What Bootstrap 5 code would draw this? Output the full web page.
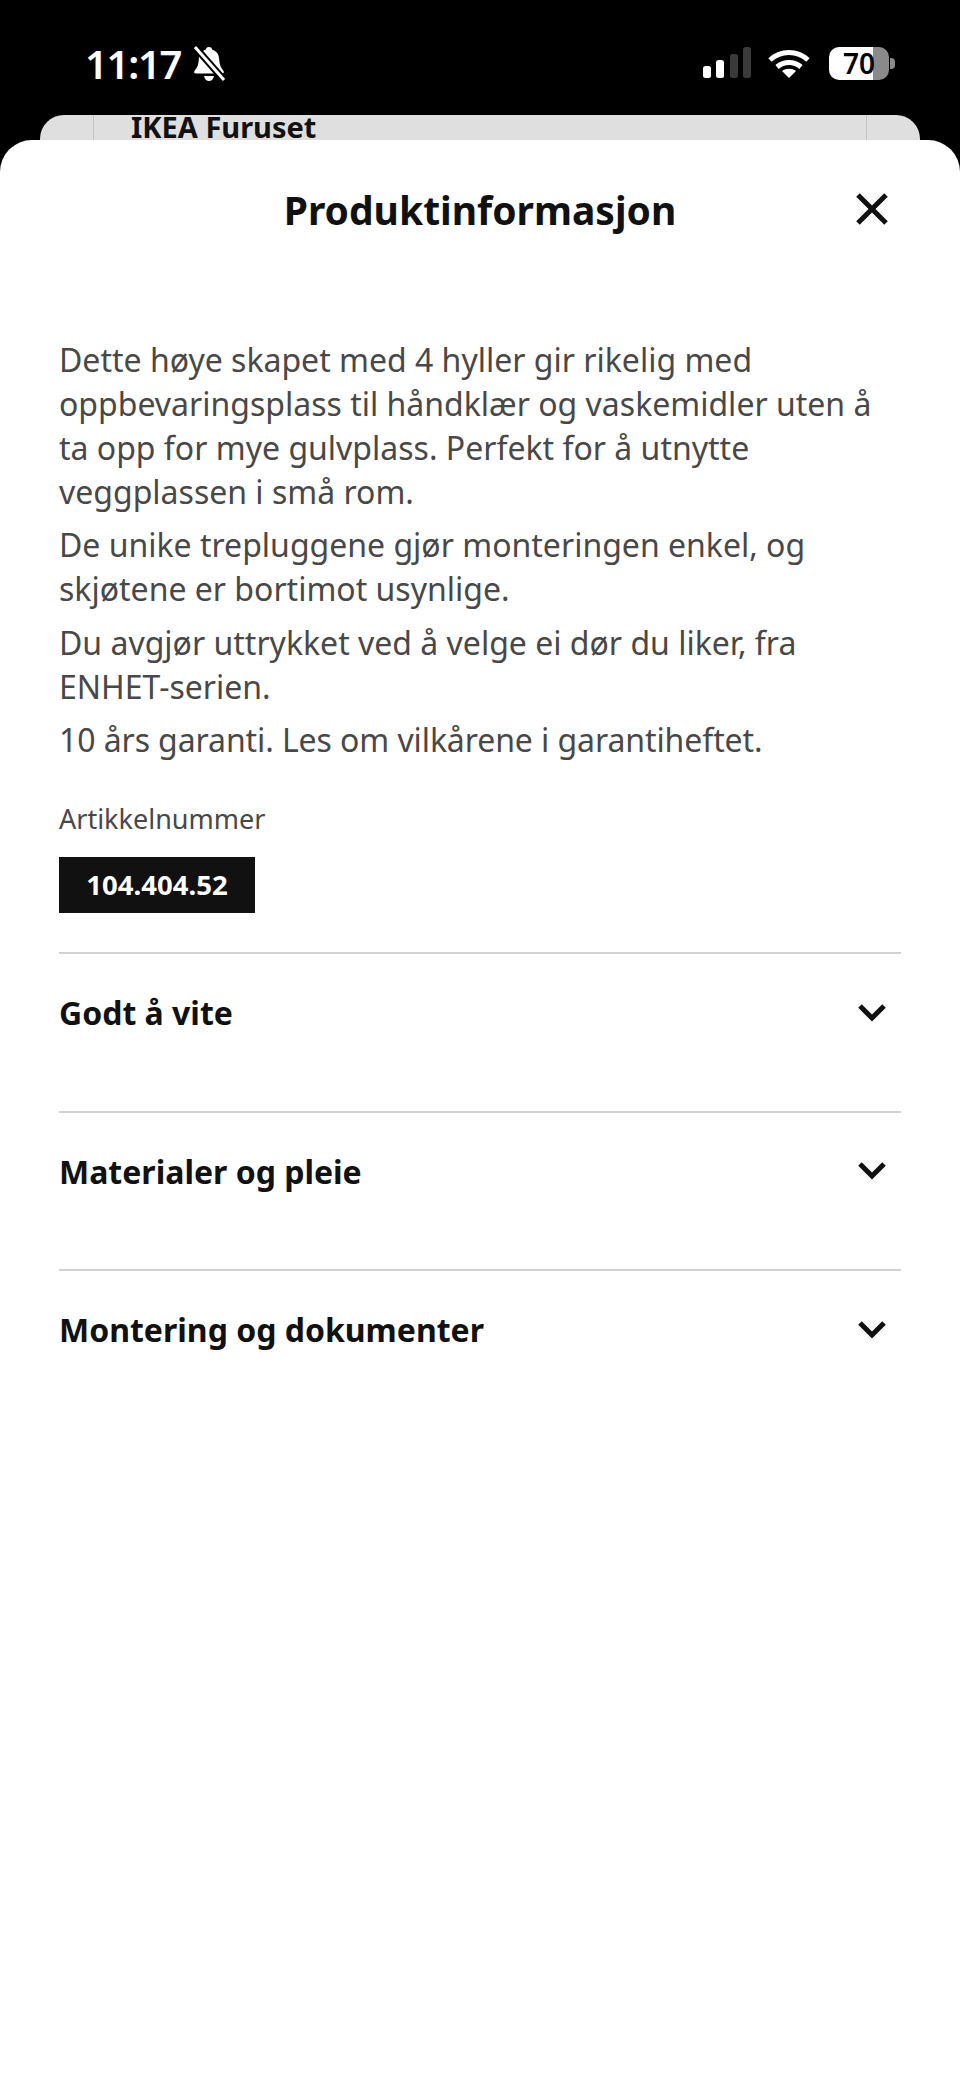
<!DOCTYPE html>
<html lang="nb">
<head>
  <meta charset="UTF-8" />
  <meta name="viewport" content="width=device-width, initial-scale=1.0"/>
  <title>Produktinformasjon</title>
  <link href="https://cdn.jsdelivr.net/npm/bootstrap@5.3.0/dist/css/bootstrap.min.css" rel="stylesheet" />
  <style>
    html, body { height: 100%; }
    body { background: #000; font-family: "Noto Sans", sans-serif; color: #111; overflow: hidden; }
    .phone { height: 2078px; }
    .status-row { height: 115px; padding: 37px 65px 0 85px; color: #fff; }
    .clock { font-size: 40px; font-weight: 600; line-height: 54px; letter-spacing: -1.3px; }
    .status-bell { margin-top: 9px; margin-left: 3px; }
    .status-icon { margin-top: 10px; }
    .signal-icon { margin-right: 17px; }
    .battery { width: 60px; height: 33px; border-radius: 10px; background: linear-gradient(90deg, #fff 44px, #8a8a8a 44px); font-size: 28px; font-weight: 600; line-height: 33px; color: #000; }
    .battery-wrap { margin-top: 10px; margin-left: 19px; }
    .battery-nub { width: 5px; height: 11px; background: #8a8a8a; border-radius: 0 4px 4px 0; margin-left: 1px; }
    .behind-card { height: 25px; margin: 0 40px; background: #dfdfdf; border-radius: 24px 24px 0 0; padding: 0 53px; }
    .behind-inner { height: 25px; border-left: 1px solid #c4c4c4; border-right: 1px solid #c4c4c4; padding-left: 37px; font-size: 29px; font-weight: 700; line-height: 24px; white-space: nowrap; }
    .sheet { height: 1938px; background: #fff; border-radius: 32px 32px 0 0; padding: 0 59px; }
    .sheet-head { height: 140px; position: relative; }
    .sheet-title { font-size: 39px; font-weight: 700; line-height: 52px; margin: 0; }
    .close-btn { position: absolute; right: 13px; top: 53px; line-height: 0; }
    .descr { margin-top: 58px; font-size: 32px; line-height: 44px; color: #484848; }
    .descr p { margin: 0 0 9.3px; }
    .descr p.tight-line { letter-spacing: -.09px; }
    .art-label { margin-top: 38.5px; font-size: 27px; line-height: 37px; color: #484848; }
    .art-no { width: 196px; height: 56px; margin-top: 20px; background: #111; color: #fff; font-size: 27.5px; font-weight: 700; line-height: 56px; }
    .acc-list { margin-top: 39px; }
    .acc-row { height: 158.5px; border-top: 2px solid #d2d2d2; padding: 37px 15px 0 0; font-size: 32px; font-weight: 700; line-height: 44px; }
    .acc-chev { margin-top: 11.5px; }
  </style>
</head>
<body>
  <div class="phone d-flex flex-column">
    <div class="status-row d-flex justify-content-between align-items-start">
      <div class="d-flex align-items-start gap-2">
        <span class="clock">11:17</span>
        <svg class="status-bell" width="34" height="36" viewBox="0 0 34 36" fill="#fff">
          <path d="M17 1c2 0 3 1.300 3.300 2.800 4.600 1.300 6.700 5 6.900 9.700.2 5 1.600 8.400 4.300 11.500.8 1 .2 2.500-1.200 2.500H3.700c-1.400 0-2-1.500-1.200-2.500 2.700-3.100 4.100-6.500 4.300-11.500.2-4.700 2.300-8.400 6.900-9.700C14 2.300 15 1 17 1z"/>
          <path d="M12 30h10c-.5 3-2.500 5-5 5s-4.500-2-5-5z"/>
          <path d="M3 1l29 33" stroke="#000" stroke-width="7" fill="none"/>
          <path d="M3 1l29 33" stroke="#fff" stroke-width="3" fill="none"/>
        </svg>
      </div>
      <div class="d-flex align-items-start">
        <svg class="status-icon signal-icon" width="48" height="32" viewBox="0 0 48 32">
          <rect x="0" y="19" width="8" height="12" rx="2.500" fill="#fff"/>
          <rect x="13" y="13" width="8" height="18" rx="2.500" fill="#fff"/>
          <rect x="27" y="7" width="8" height="24" rx="2.500" fill="#3a3a3a"/>
          <rect x="40" y="0" width="8" height="31" rx="2.500" fill="#3a3a3a"/>
        </svg>
        <svg class="status-icon" width="42" height="32" viewBox="0 0 42 32" fill="none" stroke="#fff" stroke-width="5">
          <path d="M2 13c11-10 27-10 38 0"/>
          <path d="M9 20c7-6 17-6 24 0"/>
          <path d="M21 31l-7-7c4-3 10-3 14 0z" fill="#fff" stroke="none"/>
        </svg>
        <div class="battery-wrap d-flex align-items-center">
          <div class="battery text-center">70</div>
          <div class="battery-nub"></div>
        </div>
      </div>
    </div>
    <div class="behind-card"><div class="behind-inner">IKEA Furuset</div></div>
    <div class="sheet">
      <div class="sheet-head text-center d-flex align-items-center justify-content-center">
        <h1 class="sheet-title">Produktinformasjon</h1>
        <span class="close-btn">
          <svg width="32" height="32" viewBox="0 0 32 32" stroke="#111" stroke-width="5" fill="none"><path d="M2 2l28 28M30 2L2 30"/></svg>
        </span>
      </div>
      <div class="descr">
        <p>Dette høye skapet med 4 hyller gir rikelig med oppbevaringsplass til håndklær og vaskemidler uten å ta opp for mye gulvplass. Perfekt for å utnytte veggplassen i små rom.</p>
        <p>De unike trepluggene gjør monteringen enkel, og skjøtene er bortimot usynlige.</p>
        <p>Du avgjør uttrykket ved å velge ei dør du liker, fra ENHET-serien.</p>
        <p class="tight-line">10 års garanti. Les om vilkårene i garantiheftet.</p>
      </div>
      <div class="art-label">Artikkelnummer</div>
      <div class="art-no text-center">104.404.52</div>
      <div class="acc-list">
        <div class="acc-row d-flex justify-content-between align-items-start">
          <span>Godt å vite</span>
          <svg class="acc-chev" width="28" height="20" viewBox="0 0 28 20" stroke="#111" stroke-width="5" fill="none"><path d="M2 3l12 12L26 3"/></svg>
        </div>
        <div class="acc-row d-flex justify-content-between align-items-start">
          <span>Materialer og pleie</span>
          <svg class="acc-chev" width="28" height="20" viewBox="0 0 28 20" stroke="#111" stroke-width="5" fill="none"><path d="M2 3l12 12L26 3"/></svg>
        </div>
        <div class="acc-row d-flex justify-content-between align-items-start">
          <span>Montering og dokumenter</span>
          <svg class="acc-chev" width="28" height="20" viewBox="0 0 28 20" stroke="#111" stroke-width="5" fill="none"><path d="M2 3l12 12L26 3"/></svg>
        </div>
      </div>
    </div>
  </div>
  <script src="https://cdn.jsdelivr.net/npm/bootstrap@5.3.0/dist/js/bootstrap.bundle.min.js"></script>
</body>
</html>
